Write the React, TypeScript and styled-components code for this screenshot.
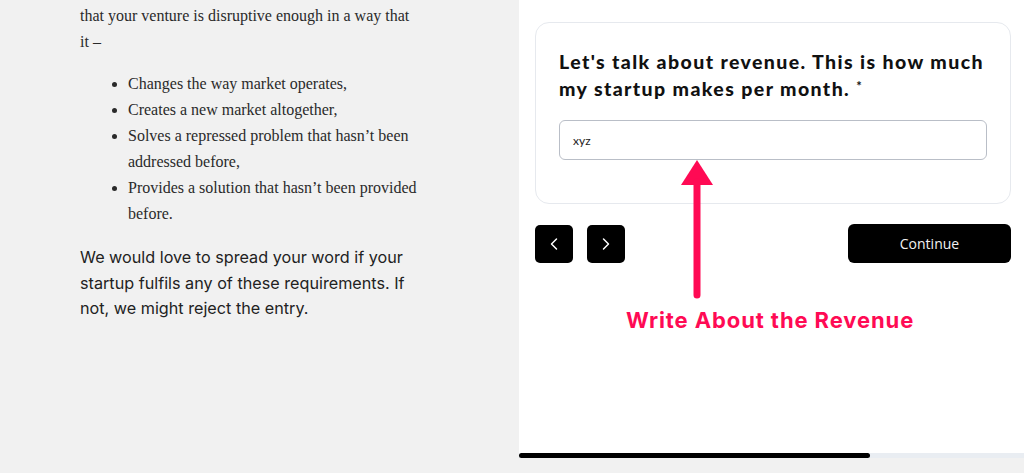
import styled, {createGlobalStyle} from 'styled-components';
import {ChevronLeft, ChevronRight} from 'lucide-react';

const GlobalStyle = createGlobalStyle`
    html, body {
        margin: 0;
        padding: 0;
        background: #f1f1f1;
    }
    #root {
        height: 473px;
    }
`;

const Page = styled.div`
    display: flex;
    width: 1024px;
    height: 473px;
    overflow: hidden;
    background: #f1f1f1;
`;

const Article = styled.div`
    width: 519px;
    padding: 3px 0 0 80px;
    box-sizing: border-box;
`;

const SerifText = styled.p`
    width: 340px;
    margin: 0;
    font-family: "Liberation Serif", "Times New Roman", serif;
    font-size: 16px;
    line-height: 26px;
    color: #2a2a2a;
`;

const BulletList = styled.ul`
    width: 340px;
    margin: 16px 0 0;
    padding-left: 48px;
    box-sizing: border-box;
    font-family: "Liberation Serif", "Times New Roman", serif;
    font-size: 16px;
    line-height: 26px;
    color: #2a2a2a;
`;

const SansText = styled.p`
    width: 340px;
    margin: 18px 0 0;
    font-family: Inter, "Noto Sans", sans-serif;
    font-size: 16.2px;
    line-height: 25.5px;
    color: #222;
`;

const FormColumn = styled.div`
    flex: 1;
    display: flex;
    flex-direction: column;
`;

const FormPanel = styled.div`
    position: relative;
    height: 453px;
    background: #fff;
    padding: 22px 13px 0 16px;
    box-sizing: border-box;
`;

const Card = styled.div`
    border: 1px solid #e6e9ee;
    border-radius: 14px;
    padding: 25px 23px 43px 23px;
`;

const Question = styled.h2`
    margin: 0;
    font-family: Lato, "Open Sans", sans-serif;
    font-weight: 900;
    font-size: 19.5px;
    line-height: 27px;
    letter-spacing: 1.4px;
    color: #111;
`;

const Required = styled.span`
    display: inline-block;
    font-size: 13px;
    line-height: 10px;
    font-weight: 700;
    letter-spacing: 0;
    margin-left: 6px;
    vertical-align: 5px;
`;

const TextInput = styled.div`
    margin-top: 18px;
    height: 40px;
    border: 1px solid #b9bec7;
    border-radius: 6px;
    box-sizing: border-box;
    display: flex;
    align-items: center;
    padding-left: 13px;
    font-family: Lato, "Open Sans", sans-serif;
    font-size: 12px;
    color: #222;
`;

const NavRow = styled.div`
    display: flex;
    align-items: center;
    gap: 14px;
    margin-top: 20px;
`;

const IconButton = styled.button`
    width: 38px;
    height: 38px;
    border: none;
    border-radius: 5px;
    background: #000;
    color: #fff;
    display: flex;
    align-items: center;
    justify-content: center;
    padding: 0;
`;

const ContinueButton = styled.button`
    margin-left: auto;
    width: 163px;
    height: 39px;
    border: none;
    border-radius: 6px;
    background: #000;
    color: #f2f2f2;
    font-family: "Open Sans", sans-serif;
    font-weight: 500;
    font-size: 14px;
`;

const Annotation = styled.div`
    position: absolute;
    left: 107px;
    top: 307px;
    font-family: Inter, "Open Sans", sans-serif;
    font-weight: 700;
    font-size: 22px;
    letter-spacing: 0.9px;
    color: #ff0a54;
`;

const Arrow = styled.svg`
    position: absolute;
    left: 160px;
    top: 158px;
`;

const ProgressTrack = styled.div`
    height: 5px;
    background: #e9edf2;
`;

const ProgressFill = styled.div`
    height: 100%;
    background: #000;
    border-radius: 3px;
`;

export default function App() {
    const progress = 69.5;
    return <>
        <GlobalStyle/>
        <Page>
            <Article>
                <SerifText>that your venture is disruptive enough in a way that it –</SerifText>
                <BulletList>
                    <li>Changes the way market operates,</li>
                    <li>Creates a new market altogether,</li>
                    <li>Solves a repressed problem that hasn’t been addressed before,</li>
                    <li>Provides a solution that hasn’t been provided before.</li>
                </BulletList>
                <SansText>
                    We would love to spread your word if your startup fulfils any of these requirements. If not, we might reject the entry.
                </SansText>
            </Article>
            <FormColumn>
                <FormPanel>
                    <Card>
                        <Question>
                            Let's talk about revenue. This is how much my startup makes per month.<Required>*</Required>
                        </Question>
                        <TextInput>xyz</TextInput>
                    </Card>
                    <NavRow>
                        <IconButton><ChevronLeft size={20} strokeWidth={1.75}/></IconButton>
                        <IconButton><ChevronRight size={20} strokeWidth={1.75}/></IconButton>
                        <ContinueButton>Continue</ContinueButton>
                    </NavRow>
                    <Arrow width="36" height="144" viewBox="0 0 36 144">
                        <polygon points="18,2 34,27 2,27" fill="#ff0a54"/>
                        <line x1="18" y1="24" x2="18" y2="137" stroke="#ff0a54" strokeWidth="7" strokeLinecap="round"/>
                    </Arrow>
                    <Annotation>Write About the Revenue</Annotation>
                </FormPanel>
                <ProgressTrack>
                    <ProgressFill style={{width: `${progress}%`}}/>
                </ProgressTrack>
            </FormColumn>
        </Page>
    </>;
}
